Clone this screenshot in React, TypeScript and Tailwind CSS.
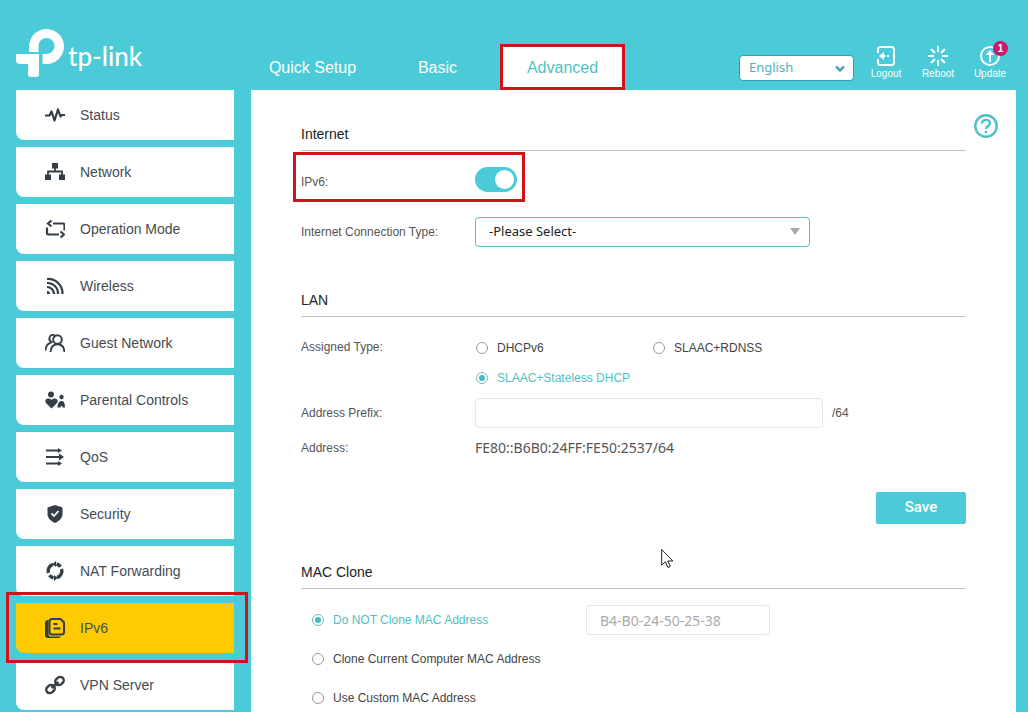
import type { ReactNode } from 'react'

type MenuItem = {
  label: string
  icon: ReactNode
  active?: boolean
}

const menu: MenuItem[] = [
  {
    label: 'Status',
    icon: <path d="M0 10.500h4.500l2-4 3 9 3.500-11 2.500 7 1.500-1.500H20" fill="none" stroke="currentColor" strokeWidth="2.200" strokeLinejoin="round" />,
  },
  {
    label: 'Network',
    icon: (
      <>
        <path d="M7 1h6v5.500H7zM0 12.500h6V18H0zM14 12.500h6V18h-6z" fill="currentColor" />
        <path d="M10 6v3.500M3 13V9.500h14V13" fill="none" stroke="currentColor" strokeWidth="1.800" />
      </>
    ),
  },
  {
    label: 'Operation Mode',
    icon: (
      <path
        d="M6.500 1.500L3 4.500l3.500 3M8 4.500h10q1.500 0 1.500 1.500v5.500M15.500 12.500l3.500 3-3.500 3M14 15.500H4Q2 15.500 2 14V8.500"
        fill="none"
        stroke="currentColor"
        strokeWidth="2.200"
      />
    ),
  },
  {
    label: 'Wireless',
    icon: (
      <g fill="none" stroke="currentColor" strokeWidth="2.200">
        <path d="M2 3a14.500 14.500 0 0 1 15.500 15M2 7a10.500 10.500 0 0 1 11 11M2 11a7 7 0 0 1 7 7" />
        <path d="M2 15a3 3 0 0 1 3 3H2z" fill="currentColor" stroke="none" />
      </g>
    ),
  },
  {
    label: 'Guest Network',
    icon: (
      <g fill="none" stroke="currentColor" strokeWidth="1.900">
        <circle cx="12.500" cy="6.500" r="4.300" />
        <path d="M5.500 19c.4-5 2.800-7.800 7-7.800s6.600 2.800 7 7.800M7.500 9.500C2 7.500 4.500 0 10 2.300M.5 17.500c.3-4 2-6.800 5.500-7.800" />
      </g>
    ),
  },
  {
    label: 'Parental Controls',
    icon: (
      <g fill="currentColor">
        <circle cx="6" cy="4.500" r="3" />
        <path d="M6.500 18.500L1 13C-1.500 9.500 3 6.500 6.500 10 10 6.500 14.500 9.500 12 13z" />
        <circle cx="16.500" cy="7" r="2.200" />
        <path d="M12.500 17.500c0-3 1-6.500 4-6.500s3.500 3.500 3.500 6.500h-2.200l-1.300-2-1.300 2z" />
      </g>
    ),
  },
  {
    label: 'QoS',
    icon: (
      <>
        <path d="M1 3.500h13M1 10h14M1 16.500h13" stroke="currentColor" strokeWidth="2.200" />
        <path d="M13 1l4 2.500L13 6zM14 6.500l5 3.500-5 3.500zM13 14l4 2.500-4 2.500z" fill="currentColor" />
      </>
    ),
  },
  {
    label: 'Security',
    icon: (
      <>
        <path d="M10 1l7.500 2.500V10c0 4-3 7-7.500 9-4.500-2-7.500-5-7.500-9V3.500z" fill="currentColor" />
        <path d="M6.500 9.500L9 12l4.500-5" fill="none" stroke="white" strokeWidth="1.800" />
      </>
    ),
  },
  {
    label: 'NAT Forwarding',
    icon: (
      <>
        <g fill="none" stroke="currentColor" strokeWidth="3.400">
          <path d="M8 3.300A7 7 0 0 0 3.400 12" />
          <path d="M4.500 14.300A7 7 0 0 0 8.500 17" />
          <path d="M12 16.700A7 7 0 0 0 16.600 8" />
          <path d="M15.500 5.700A7 7 0 0 0 11.500 3" />
        </g>
        <path d="M11 0v6L7.500 3zM9 20v-6l3.500 3z" fill="currentColor" />
      </>
    ),
  },
  {
    label: 'IPv6',
    active: true,
    icon: (
      <>
        <path d="M3.500 2H2Q0 3 0 5v12q0 3 3 3h10q2 0 3-1.500H5.500q-2 0-2-2z" fill="currentColor" />
        <path
          d="M7 1h8.500L19 4.500V14q0 2.500-2.500 2.500H7q-2.500 0-2.500-2.500V3.500Q4.500 1 7 1zM8.500 6h4M8.500 10.500h7"
          fill="none"
          stroke="currentColor"
          strokeWidth="2"
        />
      </>
    ),
  },
  {
    label: 'VPN Server',
    icon: (
      <g fill="none" stroke="currentColor" strokeWidth="2.400">
        <rect x="10" y="2.500" width="9" height="7" rx="3.500" transform="rotate(-40 14.500 6)" />
        <rect x="1" y="10.500" width="9" height="7" rx="3.500" transform="rotate(-40 5.500 14)" />
        <path d="M6.500 13l7-6" />
      </g>
    ),
  },
]

const tabs = ['Quick Setup', 'Basic', 'Advanced']

function Highlight({ className }: { className: string }) {
  return <span className={`pointer-events-none absolute z-10 border-3 border-[#d0121b] ${className}`} />
}

function Logo() {
  return (
    <a href="#" className="flex w-[234px] text-white" aria-label="tp-link">
      <svg width="48" height="50" viewBox="0 0 48 50" fill="currentColor">
        <path d="M13 24V18A17.500 17.500 0 1 1 30.500 36H26.500V26h4a8 8 0 1 0-8-8v6z" />
        <path d="M0 26h23v20q0 3-3 3h-5q-3 0-3-3V36H4q-4 0-4-4z" />
      </svg>
      <span className="mt-3 ml-1 font-['Lato',sans-serif] text-[26px] leading-8 font-medium">tp-link</span>
    </a>
  )
}

function HeaderAction({ label, badge, children }: { label: string; badge?: string; children: ReactNode }) {
  return (
    <button type="button" className="relative flex w-[52px] flex-col items-center gap-px text-[10px] leading-3 text-white">
      <svg width="22" height="22" viewBox="0 0 22 22" fill="none" stroke="currentColor" strokeWidth="2">
        {children}
      </svg>
      {label}
      {badge && (
        <span className="absolute -top-1 right-2 flex size-[15px] items-center justify-center rounded-full bg-[#cb1a6b] text-[10px] font-bold">
          {badge}
        </span>
      )}
    </button>
  )
}

function SectionTitle({ children }: { children: ReactNode }) {
  return <h2 className="flex h-[34px] items-center border-b border-[#c4c4c4] text-sm text-[#222]">{children}</h2>
}

function Radio({ name, label, checked }: { name: string; label: string; checked?: boolean }) {
  return (
    <label className={`flex items-center gap-[9px] ${checked ? 'text-[#4fbfc4]' : 'text-[#444]'}`}>
      <input
        type="radio"
        name={name}
        defaultChecked={checked}
        className="size-3 appearance-none rounded-full border border-[#999] p-0.5 before:block before:size-full before:rounded-full checked:border-[#7fb5b8] checked:before:bg-[#3fbcc4]"
      />
      {label}
    </label>
  )
}

export default function App() {
  return (
    <div className="flex min-h-screen flex-col bg-[#4acbd7] pr-3 pl-4 font-['Liberation_Sans',sans-serif] text-xs text-[#555]">
      <header className="flex h-[90px] items-end">
        <div className="self-start pt-7">
          <Logo />
        </div>
        <nav className="flex">
          {tabs.map((tab) => (
            <a
              key={tab}
              href="#"
              className={`relative flex h-[45px] w-[125px] items-center justify-center text-base ${
                tab === 'Advanced' ? 'rounded-t bg-white text-[#4fbfc6]' : 'text-white'
              }`}
            >
              {tab}
              {tab === 'Advanced' && <Highlight className="inset-x-0 -top-px bottom-0" />}
            </a>
          ))}
        </nav>
        <div className="ml-auto flex items-start pb-[9px]">
          <div className="relative mt-2.5 mr-1.5">
            <select
              aria-label="Language"
              className="h-[26px] w-[115px] appearance-none rounded border border-[#2f9fa9] bg-white pl-[9px] font-['Noto_Sans',sans-serif] text-[13px] text-[#4fb3b9]"
            >
              <option>English</option>
            </select>
            <svg className="pointer-events-none absolute top-2.5 right-2" width="12" height="8" viewBox="0 0 12 8" fill="none" stroke="#55a9ae" strokeWidth="2.500">
              <path d="M2 1.500l4 4 4-4" />
            </svg>
          </div>
          <HeaderAction label="Logout">
            <path d="M3 8V4.500Q3 2 5.500 2h11Q19 2 19 4.500v13q0 2.500-2.500 2.500h-11Q3 20 3 17.500V14" />
            <path d="M8 11h2.500M12 11h2" />
            <path d="M4 11l5-4v8z" fill="currentColor" stroke="none" />
          </HeaderAction>
          <HeaderAction label="Reboot">
            <path d="M11 1v6M11 15v6M1 11h6M15 11h6M4 4l4 4M14 14l4 4M18 4l-4 4M8 14l-4 4" />
          </HeaderAction>
          <HeaderAction label="Update" badge="1">
            <circle cx="11" cy="11" r="9" />
            <path d="M11 17V8" />
            <path d="M11 5l4.500 5h-9z" fill="currentColor" stroke="none" />
          </HeaderAction>
        </div>
      </header>

      <div className="flex flex-1">
        <aside className="mr-[17px] w-[218px]">
          <ul className="flex flex-col gap-[7px]">
            {menu.map((item) => (
              <li key={item.label} className="relative">
                <a
                  href="#"
                  className={`flex h-[50px] items-center gap-[15px] rounded-bl-lg pl-[29px] text-sm ${
                    item.active ? 'bg-[#ffcb00]' : 'bg-white'
                  } text-[#444c54]`}
                >
                  <svg width="20" height="20" viewBox="0 0 20 20" className="text-[#353e46]">
                    {item.icon}
                  </svg>
                  {item.label}
                </a>
                {item.active && <Highlight className="-top-[11px] -right-[14px] -bottom-[10px] -left-[10px]" />}
              </li>
            ))}
          </ul>
        </aside>

        <main className="flex flex-1 items-start bg-white pr-[18px] pl-[50px]">
          <div className="flex-1 pt-[27px]">
            <section>
              <SectionTitle>Internet</SectionTitle>
              <div className="relative flex h-[57px] items-center">
                <label htmlFor="ipv6" className="w-[174px] pt-1">IPv6:</label>
                <input
                  id="ipv6"
                  type="checkbox"
                  role="switch"
                  defaultChecked
                  className="h-[25px] w-[42px] appearance-none rounded-full bg-gray-300 p-[3px] before:block before:size-[19px] before:rounded-full before:bg-white checked:bg-[#4acbd7] checked:before:ml-auto"
                />
                <Highlight className="top-px -left-2 h-[50px] w-[232px]" />
              </div>
              <div className="mt-[9px] flex h-[30px] items-center">
                <label htmlFor="wan-type" className="w-[174px]">Internet Connection Type:</label>
                <div className="relative">
                  <select
                    id="wan-type"
                    className="h-[30px] w-[335px] appearance-none rounded border border-[#5fbcbc] bg-white pl-[13px] font-['Noto_Sans',sans-serif] text-[13px] text-[#222]"
                  >
                    <option>-Please Select-</option>
                  </select>
                  <svg className="pointer-events-none absolute top-[11px] right-2.5" width="10" height="8" viewBox="0 0 10 8" fill="#aaa">
                    <path d="M0 0h10L5 7z" />
                  </svg>
                </div>
              </div>
            </section>

            <section className="mt-9">
              <SectionTitle>LAN</SectionTitle>
              <div className="mt-4 flex">
                <span id="assigned" className="w-[174px] leading-[28px]">Assigned Type:</span>
                <div role="radiogroup" aria-labelledby="assigned" className="grid auto-rows-[30px] grid-cols-[177px_177px] pl-px">
                  <Radio name="assigned" label="DHCPv6" />
                  <Radio name="assigned" label="SLAAC+RDNSS" />
                  <Radio name="assigned" label="SLAAC+Stateless DHCP" checked />
                </div>
              </div>
              <div className="mt-[5px] flex h-[30px] items-center">
                <label htmlFor="prefix" className="w-[174px]">Address Prefix:</label>
                <input id="prefix" type="text" className="mr-[9px] h-[30px] w-[348px] rounded border border-[#e6e6e6] px-3 text-[13px]" />
                /64
              </div>
              <div className="mt-[5px] flex h-[30px] items-center">
                <span className="w-[174px]">Address:</span>
                <span className="font-['Noto_Sans',sans-serif] text-sm">FE80::B6B0:24FF:FE50:2537/64</span>
              </div>
              <div className="mt-[29px] flex justify-end">
                <button type="button" className="h-8 w-[90px] rounded-xs bg-[#4acbd7] font-['Roboto',sans-serif] text-[15px] font-medium text-white">
                  Save
                </button>
              </div>
            </section>

            <section className="relative mt-[31px]">
              <SectionTitle>MAC Clone</SectionTitle>
              <div className="mt-[17px] grid auto-rows-[28px] gap-y-[11px] pl-[11px]">
                <div className="flex items-center">
                  <div className="w-[274px]">
                    <Radio name="mac" label="Do NOT Clone MAC Address" checked />
                  </div>
                  <input
                    aria-label="MAC address"
                    type="text"
                    disabled
                    defaultValue="B4-B0-24-50-25-38"
                    className="h-[30px] w-[184px] rounded border border-[#e6e6e6] px-[13px] font-['Noto_Sans',sans-serif] text-sm text-[#aaa]"
                  />
                </div>
                <Radio name="mac" label="Clone Current Computer MAC Address" />
                <Radio name="mac" label="Use Custom MAC Address" />
              </div>
              <svg className="pointer-events-none absolute -top-[7px] left-[360px]" width="13" height="21" viewBox="0 0 13 21" fill="white" stroke="#222">
                <path d="M.7 1.500v15.700l3.600-3.400 2.600 5.700 2.400-1.100-2.500-5.400h5z" />
              </svg>
            </section>
          </div>
          <button type="button" aria-label="Help" className="mt-6 ml-2 text-[#4fc0c6]">
            <svg width="24" height="24" viewBox="0 0 24 24" fill="none" stroke="currentColor" strokeWidth="2.400">
              <circle cx="12" cy="12" r="10.700" />
              <path d="M8 9.500C8 4.500 16 5 16 9.200c0 2.800-4 2.800-4 5.800M12 16.800v2.400" />
            </svg>
          </button>
        </main>
      </div>
    </div>
  )
}
